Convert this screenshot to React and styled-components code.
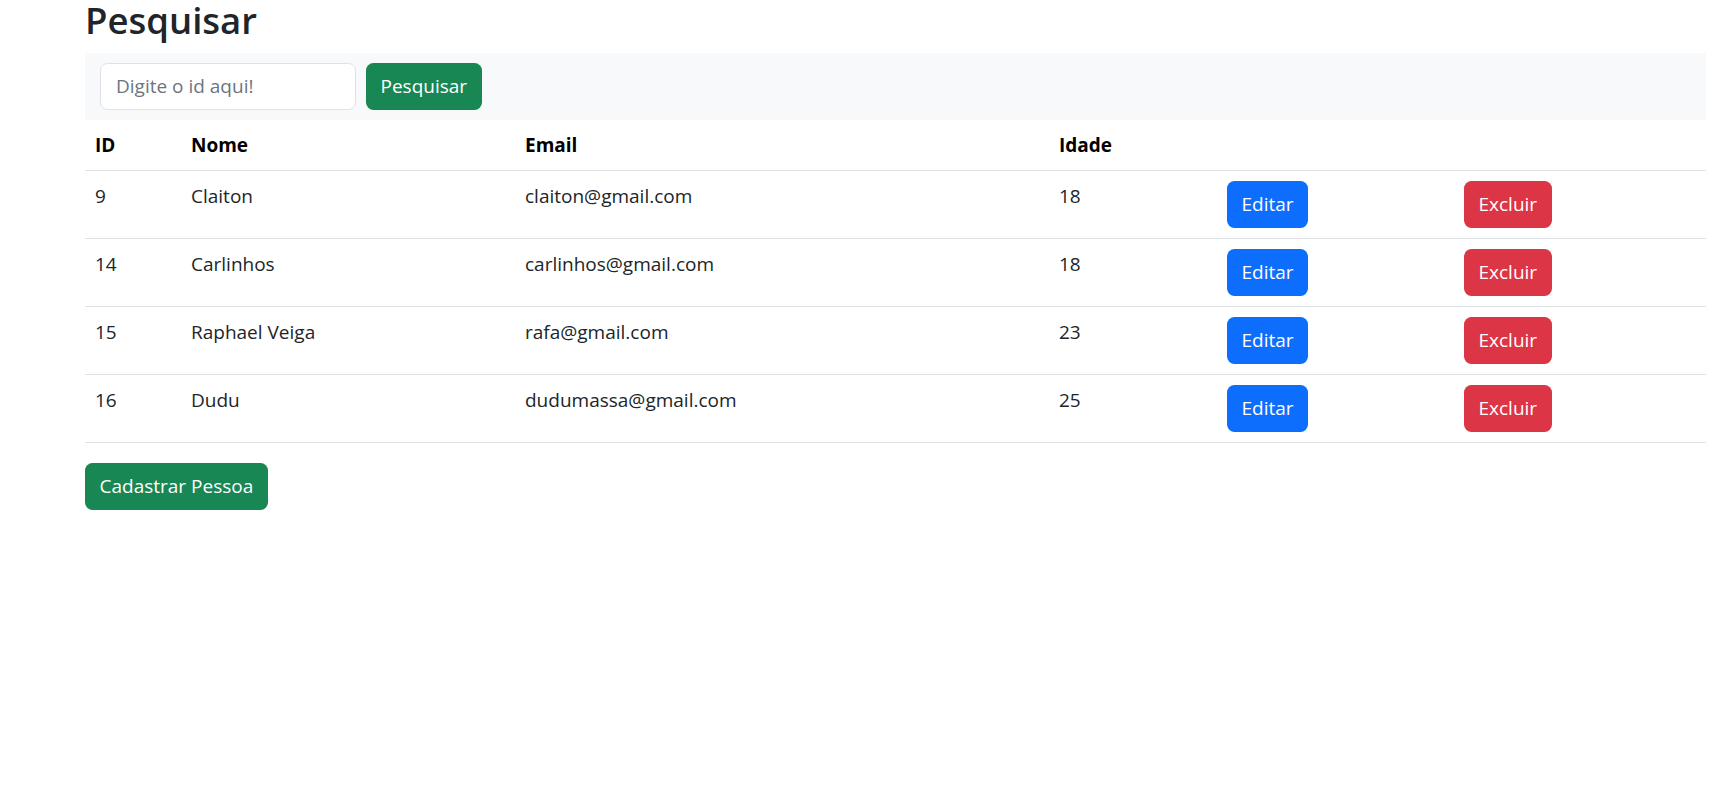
import React from 'react';
import styled, { createGlobalStyle } from 'styled-components';

const GlobalStyle = createGlobalStyle`
  html, body {
    margin: 0;
    padding: 0;
    background: #fff;
  }
  body {
    font-family: 'Open Sans', 'Noto Sans', Arial, sans-serif;
    font-size: 20px;
    color: #212529;
  }
  * {
    box-sizing: border-box;
  }
`;

const Page = styled.div`
  padding: 0 26px 0 85px;
`;

const Title = styled.h2`
  margin: 0 0 13px;
  padding-top: 0;
  font-size: 36.5px;
  line-height: 40px;
  font-weight: 600;
  color: #212529;
`;

const SearchBar = styled.form`
  display: flex;
  align-items: center;
  gap: 10px;
  height: 66.5px;
  padding: 10px 15px;
  background-color: #f8f9fa;
`;

const SearchInput = styled.input`
  width: 256px;
  height: 46.5px;
  padding: 7px 15px;
  border: 1px solid #dee2e6;
  border-radius: 7.5px;
  font-family: inherit;
  font-size: 19px;
  color: #212529;
  background: #fff;
  outline: none;

  &::placeholder {
    color: #6c757d;
  }
`;

const variants = {
  success: '#198754',
  primary: '#0d6efd',
  danger: '#dc3545',
};

const Button = styled.button`
  display: inline-flex;
  align-items: center;
  justify-content: center;
  height: 46.5px;
  padding: 0 14.5px;
  border: none;
  border-radius: 7.5px;
  background-color: ${(p) => variants[p.$variant]};
  color: #fff;
  font-family: inherit;
  font-size: 19px;
  line-height: 30px;
  cursor: pointer;
  white-space: nowrap;
`;

const Table = styled.table`
  width: 100%;
  border-collapse: collapse;
  table-layout: fixed;
  margin-bottom: 20px;

  th, td {
    padding: 10px;
    text-align: left;
    vertical-align: top;
    border-bottom: 1px solid #dee2e6;
    font-size: 19px;
    line-height: 30px;
  }

  th {
    font-weight: 700;
    height: 51px;
    color: #000;
  }

  td {
    height: 68px;
    color: #212529;
  }
`;

const columns = [96, 334, 534, 168, 237, 252];

const people = [
  { id: 9, nome: 'Claiton', email: 'claiton@gmail.com', idade: 18 },
  { id: 14, nome: 'Carlinhos', email: 'carlinhos@gmail.com', idade: 18 },
  { id: 15, nome: 'Raphael Veiga', email: 'rafa@gmail.com', idade: 23 },
  { id: 16, nome: 'Dudu', email: 'dudumassa@gmail.com', idade: 25 },
];

const App = () => (
  <>
    <GlobalStyle />
    <Page>
      <Title>Pesquisar</Title>
      <SearchBar onSubmit={(e) => e.preventDefault()}>
        <SearchInput type="text" placeholder="Digite o id aqui!" />
        <Button $variant="success" type="submit">Pesquisar</Button>
      </SearchBar>
      <Table>
        <colgroup>
          {columns.map((w, i) => (
            <col key={i} style={{ width: w }} />
          ))}
        </colgroup>
        <thead>
          <tr>
            <th>ID</th>
            <th>Nome</th>
            <th>Email</th>
            <th>Idade</th>
            <th></th>
            <th></th>
          </tr>
        </thead>
        <tbody>
          {people.map((p) => (
            <tr key={p.id}>
              <td>{p.id}</td>
              <td>{p.nome}</td>
              <td>{p.email}</td>
              <td>{p.idade}</td>
              <td><Button $variant="primary">Editar</Button></td>
              <td><Button $variant="danger">Excluir</Button></td>
            </tr>
          ))}
        </tbody>
      </Table>
      <Button $variant="success">Cadastrar Pessoa</Button>
    </Page>
  </>
);

export default App;
